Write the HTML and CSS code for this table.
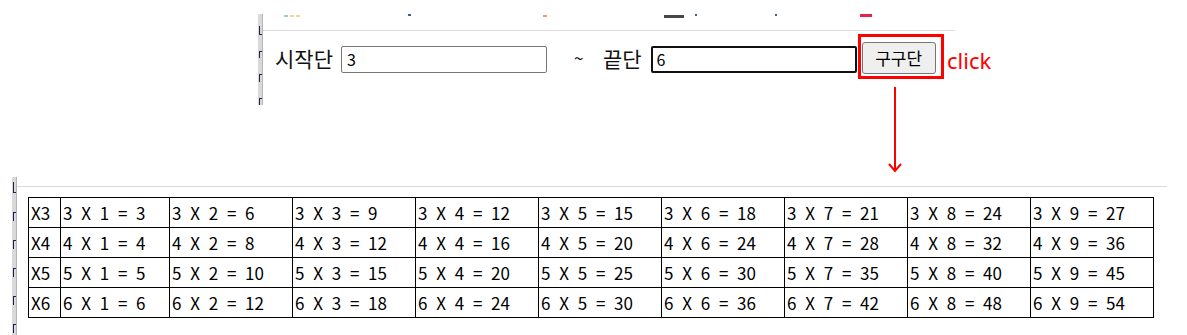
FILE: index.html
```html
<!DOCTYPE html>
<html lang="ko">
<head>
<meta charset="utf-8">
<title>구구단</title>
<link rel="stylesheet" href="styles.css">
</head>
<body>
<section class="shot top-shot">
  <div class="strip strip-top"><i class="frag f4"></i><i class="frag"></i><i class="frag"></i><i class="frag"></i></div>
  <div class="shot-body">
    <div class="icons">
      <i class="mk mk-green"></i><i class="mk mk-yellow"></i><i class="mk mk-yellow2"></i>
      <i class="mk mk-blue"></i><i class="mk mk-orange"></i><i class="mk mk-dark"></i>
      <i class="mk mk-blue2"></i><i class="mk mk-blue3"></i><i class="mk mk-red"></i>
    </div>
    <div class="form-row">
      <label class="lbl">시작단</label>
      <input class="num-input" type="text" value="3">
      <span class="tilde">~</span>
      <label class="lbl lbl-end">끝단</label>
      <input class="num-input focused" type="text" value="6">
      <button class="gugu-btn">구구단</button>
    </div>
  </div>
</section>

<div class="annot-box"></div>
<div class="annot-click">click</div>
<svg class="annot-arrow" width="16" height="90" viewBox="0 0 16 90">
  <line x1="8" y1="0" x2="8" y2="83" stroke="#ff0000" stroke-width="2"/>
  <polyline points="2,77 8,84 14,77" fill="none" stroke="#ff0000" stroke-width="2"/>
</svg>

<section class="shot bottom-shot">
  <div class="strip strip-bottom"><i class="frag f4"></i><i class="frag"></i><i class="frag"></i><i class="frag"></i><i class="frag"></i><i class="frag"></i></div>
  <div class="shot-body">
    <div class="rule"></div>
    <table class="gugu">
      <tr><td class="c0">X3</td><td class="c1">3 X 1 = 3</td><td>3 X 2 = 6</td><td>3 X 3 = 9</td><td>3 X 4 = 12</td><td>3 X 5 = 15</td><td>3 X 6 = 18</td><td>3 X 7 = 21</td><td>3 X 8 = 24</td><td>3 X 9 = 27</td></tr>
      <tr><td class="c0">X4</td><td class="c1">4 X 1 = 4</td><td>4 X 2 = 8</td><td>4 X 3 = 12</td><td>4 X 4 = 16</td><td>4 X 5 = 20</td><td>4 X 6 = 24</td><td>4 X 7 = 28</td><td>4 X 8 = 32</td><td>4 X 9 = 36</td></tr>
      <tr><td class="c0">X5</td><td class="c1">5 X 1 = 5</td><td>5 X 2 = 10</td><td>5 X 3 = 15</td><td>5 X 4 = 20</td><td>5 X 5 = 25</td><td>5 X 6 = 30</td><td>5 X 7 = 35</td><td>5 X 8 = 40</td><td>5 X 9 = 45</td></tr>
      <tr><td class="c0">X6</td><td class="c1">6 X 1 = 6</td><td>6 X 2 = 12</td><td>6 X 3 = 18</td><td>6 X 4 = 24</td><td>6 X 5 = 30</td><td>6 X 6 = 36</td><td>6 X 7 = 42</td><td>6 X 8 = 48</td><td>6 X 9 = 54</td></tr>
    </table>
  </div>
</section>
</body>
</html>
```
FILE: styles.css
```css
html, body {
  margin: 0;
  padding: 0;
  background: #ffffff;
}
body {
  position: relative;
  width: 1187px;
  height: 335px;
  overflow: hidden;
  font-family: "Noto Sans CJK KR", "Noto Sans", sans-serif;
  color: #000;
}

.shot {
  display: flex;
}
.top-shot {
  margin-left: 258px;
  padding-top: 14px;
  width: 697px;
  height: 91px;
}
.bottom-shot {
  margin-left: 12px;
  margin-top: 72px;
  width: 1155px;
}

.strip {
  flex: 0 0 4px;
  background: #d9d9d9;
  border-right: 1px solid #b5b5b5;
  display: flex;
  flex-direction: column;
  align-items: flex-start;
  gap: 16px;
}
.strip-top {
  height: 91px;
  padding-top: 12px;
  box-sizing: border-box;
}
.strip-bottom {
  height: 158px;
  padding-top: 5px;
  box-sizing: border-box;
  gap: 19px;
}
.frag {
  display: block;
  width: 3px;
  height: 9px;
  border-left: 1px solid #1a2050;
  border-top: 1px solid #1a2050;
  box-sizing: border-box;
  margin-left: 1px;
}
.frag.f4 {
  height: 11px;
  border-top: none;
  border-bottom: 1px solid #1a2050;
}

.shot-body {
  flex: 1;
}

.icons {
  height: 16px;
  border-bottom: 1px solid #dcdcdc;
  position: relative;
}
.mk {
  position: absolute;
  top: 1px;
  height: 2px;
  display: block;
}
.mk-green { left: 21px; width: 4px; background: #9fd3b0; }
.mk-yellow { left: 27px; width: 4px; background: #f5d49a; }
.mk-yellow2 { left: 33px; width: 4px; background: #f5d49a; }
.mk-blue { left: 145px; width: 3px; background: #3a5f9a; top: 0; }
.mk-orange { left: 280px; width: 4px; background: #f29a7a; }
.mk-dark { left: 401px; width: 20px; height: 3px; background: #474747; }
.mk-blue2 { left: 432px; width: 2px; background: #40608a; top: 0; }
.mk-blue3 { left: 512px; width: 2px; background: #40608a; top: 0; }
.mk-red { left: 597px; width: 12px; height: 3px; background: #e8204a; top: 0; }

.form-row {
  display: flex;
  align-items: center;
  height: 56px;
  padding-left: 12px;
  padding-bottom: 6px;
  font-size: 21px;
}
.lbl {
  line-height: 24px;
  margin-right: 8px;
  color: #111;
  margin-top: -3px;
}
.num-input {
  box-sizing: border-box;
  width: 206px;
  height: 27px;
  border: 1px solid #767676;
  border-radius: 2px;
  padding: 0 5px;
  font-family: "Noto Sans CJK KR", "Noto Sans", sans-serif;
  font-size: 16px;
  color: #000;
  background: #fff;
  outline: none;
}
.num-input.focused {
  border: 2px solid #101010;
  padding: 0 4px;
}
.tilde {
  margin: 0 16px 0 27px;
  font-size: 17px;
  width: 13px;
  margin-top: -3px;
}
.lbl-end {
  margin-right: 9px;
}
.gugu-btn {
  box-sizing: border-box;
  width: 74px;
  height: 32px;
  margin-left: 5px;
  margin-top: -3px;
  background: #efefef;
  border: 1px solid #767676;
  border-radius: 3px;
  font-family: "Noto Sans CJK KR", "Noto Sans", sans-serif;
  font-size: 17px;
  color: #000;
  padding: 0;
}

.annot-box {
  position: absolute;
  left: 858px;
  top: 34px;
  width: 80px;
  height: 39px;
  border: 3px solid #ff0000;
}
.annot-click {
  position: absolute;
  left: 947px;
  top: 45px;
  font-family: "Noto Sans", sans-serif;
  font-size: 22px;
  line-height: 30px;
  color: #ff0000;
}
.annot-arrow {
  position: absolute;
  left: 887px;
  top: 87px;
}

.rule {
  height: 9px;
  border-bottom: 1px solid #dcdcdc;
}
.gugu {
  margin: 10px 0 0 11px;
  border-collapse: collapse;
  width: 1125px;
  font-size: 17px;
  table-layout: fixed;
}
.gugu td {
  border: 1px solid #000;
  height: 30px;
  padding: 0 2px;
  line-height: 20px;
  white-space: pre;
  word-spacing: 4px;
  box-sizing: border-box;
  width: 123px;
}
.gugu td.c0 {
  width: 32px;
  word-spacing: 0;
}
.gugu td.c1 {
  width: 109px;
}
```
